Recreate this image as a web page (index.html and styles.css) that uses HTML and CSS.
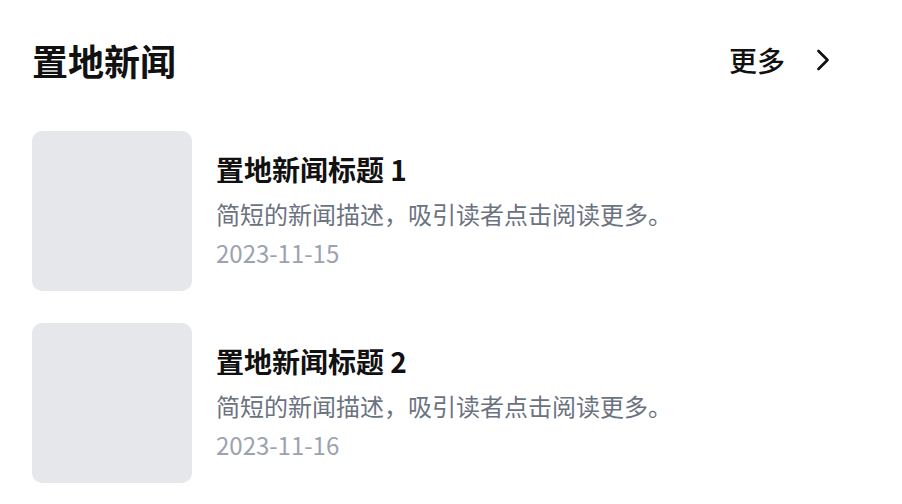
FILE: index.html
```html
<!DOCTYPE html>
<html lang="zh-CN">
<head>
<meta charset="utf-8">
<title>置地新闻</title>
<link rel="stylesheet" href="styles.css">
</head>
<body>
<section class="news">
  <header class="news-header">
    <h2 class="news-title">置地新闻</h2>
    <a class="more" href="#">
      <span>更多</span>
      <svg class="chev" width="36" height="36" viewBox="0 0 24 24" fill="none" stroke="currentColor" stroke-width="1.8" stroke-linecap="round" stroke-linejoin="round"><path d="m9 18 6-6-6-6"/></svg>
    </a>
  </header>
  <ul class="list">
    <li class="item">
      <div class="thumb"></div>
      <div class="info">
        <h3 class="item-title">置地新闻标题 1</h3>
        <p class="desc">简短的新闻描述，吸引读者点击阅读更多。</p>
        <p class="date">2023-11-15</p>
      </div>
    </li>
    <li class="item">
      <div class="thumb"></div>
      <div class="info">
        <h3 class="item-title">置地新闻标题 2</h3>
        <p class="desc">简短的新闻描述，吸引读者点击阅读更多。</p>
        <p class="date">2023-11-16</p>
      </div>
    </li>
  </ul>
</section>
</body>
</html>
```

FILE: styles.css
```css
* { box-sizing: border-box; }
html, body {
  margin: 0;
  padding: 0;
  background: #ffffff;
}
body {
  font-family: "Noto Sans CJK SC", "Noto Sans", "Liberation Sans", sans-serif;
  color: #111111;
}
.news {
  padding: 32px 61px 0 32px;
}
.news-header {
  display: flex;
  align-items: center;
  justify-content: space-between;
  height: 56px;
}
.news-title {
  margin: 0;
  font-size: 36px;
  line-height: 56px;
  font-weight: 700;
  color: #111111;
}
.more {
  display: flex;
  align-items: center;
  gap: 20px;
  color: #111111;
  text-decoration: none;
  font-size: 28px;
  font-weight: 500;
}
.chev {
  display: block;
}
.list {
  list-style: none;
  margin: 43px 0 0;
  padding: 0;
  display: flex;
  flex-direction: column;
  gap: 32px;
}
.item {
  display: flex;
  align-items: center;
  gap: 24px;
}
.thumb {
  width: 160px;
  height: 160px;
  flex: none;
  background: #e5e7eb;
  border-radius: 10px;
}
.info {
  display: flex;
  flex-direction: column;
  padding-bottom: 4px;
}
.item-title {
  margin: 0;
  font-size: 28px;
  line-height: 40px;
  font-weight: 700;
  color: #111111;
}
.desc {
  margin: 9px 0 0;
  font-size: 24px;
  line-height: 32px;
  color: #6b7280;
}
.date {
  margin: 7px 0 0;
  font-size: 24px;
  line-height: 32px;
  color: #9ca3af;
}
```
